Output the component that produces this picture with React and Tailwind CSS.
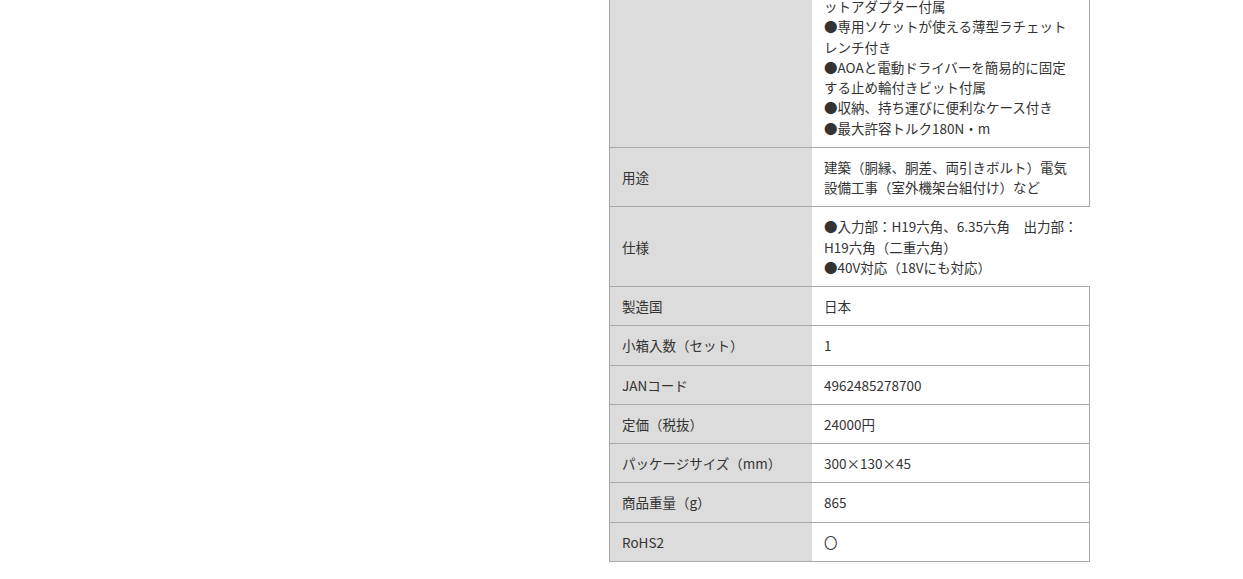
import React from "react";

const rows = [
  {
    label: "特長",
    lines: [
      "●40Vmaxインパクトドライバーに装着",
      "することで、狭い場所でのナット締",
      "め付けが可能",
      "●ソケットの交換が簡単",
      "●ギヤヘッドが小型で狭所作業に最適",
      "●付属の専用ソケットでH19六角の",
      "ナットに対応",
      "●6.35六角ビット用アダプターとソケ",
      "ットアダプター付属",
      "●専用ソケットが使える薄型ラチェット",
      "レンチ付き",
      "●AOAと電動ドライバーを簡易的に固定",
      "する止め輪付きビット付属",
      "●収納、持ち運びに便利なケース付き",
      "●最大許容トルク180N・m",
    ],
  },
  { label: "用途", lines: ["建築（胴縁、胴差、両引きボルト）電気", "設備工事（室外機架台組付け）など"] },
  {
    label: "仕様",
    lines: ["●入力部：H19六角、6.35六角　出力部：", "H19六角（二重六角）", "●40V対応（18Vにも対応）"],
  },
  { label: "製造国", lines: ["日本"] },
  { label: "小箱入数（セット）", lines: ["1"] },
  { label: "JANコード", lines: ["4962485278700"] },
  { label: "定価（税抜）", lines: ["24000円"] },
  { label: "パッケージサイズ（mm）", lines: ["300×130×45"] },
  { label: "商品重量（g）", lines: ["865"] },
  { label: "RoHS2", lines: ["〇"] },
];

export default function App() {
  return (
    <div
      className="w-[1243px] h-[579px] overflow-hidden bg-white text-[#333333] text-[13.5px] leading-[20.25px]"
      style={{ fontFamily: '"Noto Sans CJK JP", "Noto Sans", sans-serif' }}
    >
      <div className="flex">
        <div className="w-[609px] shrink-0" />
        <div className="w-[481px] shrink-0 mt-[-175.8px] border-t border-l border-r border-[#a9a9a9]">
          {rows.map((r, i) => (
            <div key={i} className="flex border-b border-[#a9a9a9]">
              <div className="w-[202px] shrink-0 bg-[#dcdcdc] px-3 py-[9px] flex items-center">
                <span className="whitespace-nowrap">{r.label}</span>
              </div>
              <div className="flex-1 px-3 py-[9px] bg-white">
                {r.lines.map((l, j) => (
                  <div key={j} className="whitespace-nowrap">
                    {l}
                  </div>
                ))}
              </div>
            </div>
          ))}
        </div>
      </div>
    </div>
  );
}
